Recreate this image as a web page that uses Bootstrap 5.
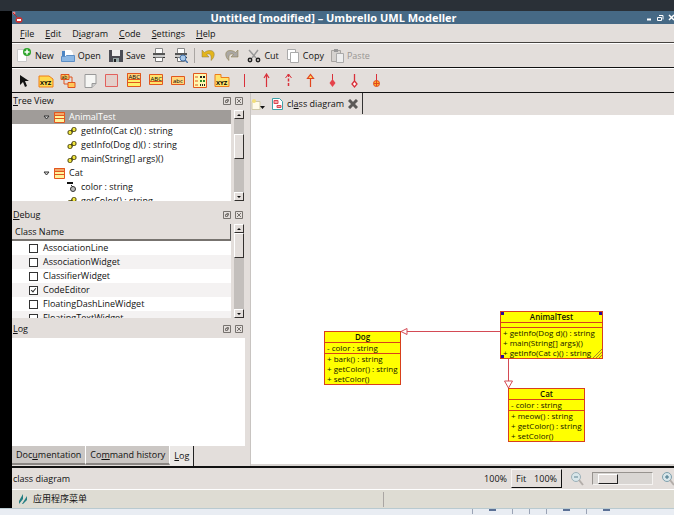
<!DOCTYPE html>
<html lang="en">
<head>
<meta charset="utf-8">
<meta name="viewport" content="width=device-width, initial-scale=1">
<title>Untitled [modified] – Umbrello UML Modeller</title>
<link href="https://cdn.jsdelivr.net/npm/bootstrap@5.3.0/dist/css/bootstrap.min.css" rel="stylesheet">
<style>
:root { --face: #e3dedb; --edge: #45423f; }
body { font: 9px/14px "Open Sans", "Noto Sans", "Noto Sans CJK SC", sans-serif; color: #111; background: #2a3037; }
button { font: inherit; color: inherit; background: none; border: 0; padding: 0; white-space: nowrap; }
svg { display: block; flex: none; }
.desk-top { height: 11px; }
.desk-bottom { height: 7px; background: #e9edf3; border-top: 1px solid #b9cad0; }
.desk-bottom i { width: 1px; height: 5px; background: #9aa3b5; }
.desk-bottom b { width: 7px; height: 2px; background: #5b7196; }
.desk-left { width: 12px; background: #000; }
.app { background: var(--face); }
.titlebar { height: 13px; background: #466985; color: #fff; font-size: 11px; line-height: 13px; }
.menus { height: 19px; gap: 11px; padding: 2px 8px 0; border-bottom: 1px solid var(--edge); }
.tools { height: 25px; border-top: 1px solid #fff; border-bottom: 1px solid #111; overflow: hidden; }
.main-tools { padding: 0 5px; }
.main-tools button { display: flex; align-items: center; gap: 3px; }
.main-tools .gap-item { margin-left: 8px; }
.main-tools .gap-tight { margin-left: 7px; }
.main-tools .vline { margin: 0 6px; }
.shape-tools { padding-left: 1px; }
.shape-tools button { width: 22px; flex: none; display: flex; justify-content: center; }
.vline { width: 1px; height: 15px; background: #aaa6a3; }
.side { width: 233px; }
.dock-title { height: 17px; line-height: 16px; padding: 0 2px 1px 1px; }
.dock-body { background: #fff; min-height: 0; }
.dock { min-height: 0; }
.dock-tree { flex: 108 1 0; padding-bottom: 6px; }
.dock-debug { flex: 111 1 0; padding-bottom: 3px; }
.dock-log { flex: 125 1 0; }
.tree li { height: 14px; display: flex; align-items: center; gap: 4px; white-space: nowrap; }
.tree li:not(.leaf) { padding-left: 31px; }
.tree .leaf { padding-left: 55px; }
.tree .chosen { background: #a09c99; color: #fff; }
.tree, .classes { flex: 1; min-width: 0; overflow: hidden; }
.classes table { width: 100%; border-collapse: separate; border-spacing: 0; }
.classes th { height: 17px; line-height: 14px; font-weight: 400; padding: 0 3px; background: var(--face); border-right: 1px solid #555; border-bottom: 2px solid #77736f; }
.classes td { height: 14px; padding: 0 0 0 17px; line-height: 14px; }
.classes tr:nth-child(even) td { background: #f4f2f2; }
.classes label { display: flex; align-items: center; gap: 5px; }
.classes input { appearance: none; width: 9px; height: 9px; margin: 0; border: 1px solid #333; background: #fff; position: relative; }
.classes input:checked::after { content: ""; position: absolute; left: 2px; top: 0; width: 3px; height: 5px; border: solid #333; border-width: 0 1px 1px 0; transform: rotate(40deg); }
.scroller { width: 14px; padding: 0 1px 0 3px; background: var(--face); }
.scroller .track { flex: 1; background: #c3bfbc; }
.scroller button, .grip { border: 1px solid; border-color: #fff #33302e #33302e #fff; background: var(--face); }
.scroller button { height: 9px; display: flex; align-items: center; justify-content: center; }
.scroller button::after { content: ""; border: solid transparent; border-width: 0 2px 2px; border-bottom-color: #111; }
.scroller button:last-child::after { border-width: 2px 2px 0; border-top-color: #111; }
.grip { height: 25px; }
.grip-mid { margin-top: 15px; }
.side-tabs { height: 20px; }
.side-tabs button { padding: 0 4px; height: 19px; background: #cbc7c4; border-right: 1px solid #fff; border-bottom: 2px solid #8a8683; }
.side-tabs .current { height: 20px; background: #ebe8e6; border-right: 1px solid #222; border-bottom: 0; }
.work { margin-left: 5px; border-left: 1px solid #c8c4c1; }
.work-tabs { height: 22px; }
.doc-tab { border-right: 1px solid #333; height: 21px; padding: 0 4px 0 1px; gap: 4px; }
.canvas { background: #fff; min-height: 0; overflow: hidden; border-bottom: 2px solid #d9d5d2; }
.uml { position: absolute; background: #ff0; border: 1px solid #d8401c; font-size: 8px; line-height: 10px; white-space: nowrap; color: #141400; }
.uml h2 { font-size: 8px; line-height: 10px; font-weight: 600; text-align: center; margin: 0; }
.uml ul { list-style: none; margin: 0; padding: 0 2px; border-top: 1px solid #d8401c; min-height: 5px; }
.dog { left: 73px; top: 216px; width: 77px; }
.animal { left: 249px; top: 196px; width: 103px; }
.cat { left: 257px; top: 273px; width: 77px; }
.handle { position: absolute; width: 3px; height: 3px; background: #2a0a9a; }
.hatch { position: absolute; right: 0; bottom: 0; }
.status { height: 23px; border-top: 2px solid #111; padding-left: 1px; }
.zoom-set { height: 19px; border: 1px solid; border-color: #f6f4f2 #111 #111 #f6f4f2; }
.zoom-set button { padding: 0 4px; }
.zoom-range { appearance: none; width: 61px; height: 13px; background: #d9d6d3; border: 1px solid; border-color: #97938f #f5f3f1 #f5f3f1 #97938f; }
.zoom-range::-webkit-slider-thumb { appearance: none; width: 20px; height: 10px; background: var(--face); border: 1px solid; border-color: #fff #222 #222 #fff; }
.taskbar { height: 19px; background: #dedcd3; border-top: 1px solid #fff; }
.task-split { margin-left: 296px; }
</style>
<script src="https://cdn.jsdelivr.net/npm/bootstrap@5.3.0/dist/js/bootstrap.bundle.min.js"></script>
</head>
<body class="vh-100 d-flex flex-column overflow-hidden">
<svg width="0" height="0" class="position-absolute" aria-hidden="true">
  <symbol id="op" viewBox="0 0 10 10"><path d="M3 7 7 3" stroke="#333" stroke-width="3"/><rect x="1" y="4.500" width="4" height="4" rx="1.500" fill="#f1e63c" stroke="#4a4410"/><rect x="5" y="1.500" width="4" height="4" rx="1.500" fill="#f1e63c" stroke="#4a4410"/></symbol>
  <symbol id="cls" viewBox="0 0 11 11"><path fill="#fff39a" stroke="#e2571e" d="M.5.500h10v10H.5z"/><path fill="#f2a868" stroke="#e2571e" d="M.5.500h10v3H.5z"/><path stroke="#e2571e" d="M0 6.500h11"/></symbol>
  <symbol id="twist" viewBox="0 0 7 5"><path d="M1 1h5L3.500 4z" fill="#ddd" stroke="#333"/></symbol>
  <symbol id="float" viewBox="0 0 8 8"><path fill="none" stroke="#77736f" d="M.5.500h7v7h-7zM2.500 5.500v-2h2v2zM3.500 2.500h2v2"/></symbol>
  <symbol id="shut" viewBox="0 0 8 8"><path fill="none" stroke="#77736f" d="M.5.500h7v7h-7zM2 2l4 4M6 2 2 6"/></symbol>
  <symbol id="printer" viewBox="0 0 14 15"><path fill="#fff" stroke="#888" d="M3.500.500h7v5h-7z"/><path fill="#555" d="M1 5h12v2H1z"/><path fill="#c9c9c9" d="M1 7h12v3H1z"/><path fill="#333" d="M1 9h12v1H1z"/><path fill="#fff" stroke="#777" d="M3.500 9.500h7v4h-7z"/></symbol>
  <symbol id="turn" viewBox="0 0 15 13"><path d="M1 1v7h7L5.500 5.500C8 4 11 5 10 11.500c4-3 5-10-1-10-2 0-4 .500-5.500 2z" fill="currentColor" stroke="#8a7a40" stroke-width=".5"/></symbol>
</svg>
<div class="desk-top flex-shrink-0"></div>
<div class="d-flex flex-grow-1 overflow-hidden">
<div class="desk-left flex-shrink-0"></div>
<div class="app d-flex flex-column flex-grow-1 overflow-hidden">
  <header class="titlebar d-flex flex-shrink-0">
    <svg width="11" height="13"><circle cx="2" cy="2" r="1.500" fill="#e88"/><path d="M1 2l4 4" stroke="#b22"/><ellipse cx="7" cy="9" rx="3.500" ry="3" fill="#c33"/><path d="M5 9h4" stroke="#fff" stroke-width="2"/></svg>
    <div class="flex-grow-1 text-center fw-bold text-truncate">Untitled [modified] – Umbrello UML Modeller</div>
    <button aria-label="Minimize"><svg width="12" height="13"><path d="M3 8.500h4" stroke="#fff" stroke-width="2"/></svg></button>
    <button aria-label="Restore"><svg width="10" height="13"><path d="M1.500 6.500h4v3h-4zM3 4.500h4v4" fill="none" stroke="#fff"/></svg></button>
    <button aria-label="Close"><svg width="8" height="13"><path d="M3 4l5 5M8 4 3 9" stroke="#fff" stroke-width="1.500"/></svg></button>
  </header>
  <nav class="menus d-flex flex-shrink-0">
    <button><u>F</u>ile</button><button><u>E</u>dit</button><button>D<u>i</u>agram</button><button><u>C</u>ode</button><button><u>S</u>ettings</button><button><u>H</u>elp</button>
  </nav>
  <div class="tools main-tools d-flex align-items-center flex-shrink-0" role="toolbar">
    <button><svg width="15" height="15"><path fill="#fff" stroke="#c9c9c9" d="M.5 1.500h9v12h-9z"/><circle cx="10" cy="4" r="4" fill="#2ea52b"/><path d="M10 1.500v5M7.500 4h5" stroke="#fff" stroke-width="1.500"/></svg>New</button>
    <button class="gap-tight"><svg width="14" height="14"><path fill="#4d86c4" d="M1 2h5l1 2h5v8H1z"/><path fill="#fff" d="M4 1h6l2 3v5H4z"/><path fill="#8db8e4" stroke="#5d8fc6" d="M.5 7.500h4l1-1h8v6H.5z"/></svg>Open</button>
    <button class="gap-item"><svg width="14" height="14"><path fill="#4c4d55" d="M0 1h14v12H0z"/><path fill="#f0f0f0" d="M3 1h8v6H3z"/><path fill="#9aa" d="M4 9h6v4H4z"/><path fill="#222" d="M5 10h2v3H5z"/></svg>Save</button>
    <button class="gap-tight" aria-label="Print"><svg width="14" height="15"><use href="#printer"/></svg></button>
    <button class="gap-item" aria-label="Print preview"><svg width="14" height="15"><use href="#printer"/><circle cx="9" cy="10" r="3" fill="#a9c9ea" stroke="#4472a8"/><path d="M11 12l3 3" stroke="#4472a8" stroke-width="1.500"/></svg></button>
    <span class="vline"></span>
    <button aria-label="Undo" style="color:#e3b51c"><svg width="15" height="13"><use href="#turn"/></svg></button>
    <button class="gap-item" aria-label="Redo" disabled style="color:#aaa7a4"><svg width="15" height="13"><use href="#turn" transform="matrix(-1 0 0 1 15 0)"/></svg></button>
    <button class="gap-item"><svg width="14" height="14"><path d="M2 1l7 8M11 1 5 9" stroke="#999" stroke-width="1.500"/><g fill="none" stroke="#222" stroke-width="1.500"><circle cx="3" cy="11" r="1.700"/><circle cx="11" cy="11" r="1.700"/></g></svg>Cut</button>
    <button class="gap-item"><svg width="13" height="14"><path fill="#fff" stroke="#aaa" d="M.5.500h8v10h-8z"/><path fill="#fff" stroke="#aaa" d="M3.500 3.500h8v10h-8z"/></svg>Copy</button>
    <button class="gap-tight" disabled style="color:#999693"><svg width="13" height="14"><path fill="#d5d2cf" stroke="#a7a4a1" d="M.5 1.500h9v11h-9z"/><path fill="#999" d="M3 0h4v3H3z"/><path fill="#eee" stroke="#aaa" d="M5.500 4.500h7v9h-7z"/></svg>Paste</button>
  </div>
  <div class="tools shape-tools d-flex align-items-center flex-shrink-0" role="toolbar">
    <button aria-label="Select"><svg width="10" height="14"><path d="M1 1v10l3-3 2 5 2-1-2-5h4z" fill="#111"/></svg></button>
    <button aria-label="Object"><svg width="16" height="14"><path d="M1 2h10l4 3v8H1z" fill="#ffd94f" stroke="#ee7d1a"/><text x="2" y="11" font-size="6" font-weight="700">XYZ</text></svg></button>
    <button aria-label="Association"><svg width="16" height="15"><path d="M1 1.500h8v5H1zM8 9.500h7v5H8z" fill="#ffc85a" stroke="#e0521d"/><path d="M9 4h3v5M4 7v4h4" fill="none" stroke="#e0521d"/><text x="1.500" y="6" font-size="5">ab</text></svg></button>
    <button aria-label="Note"><svg width="13" height="14"><path d="M1 .500h11v9l-4 4H1z" fill="#f6f6f4" stroke="#999"/><path d="M12 9.500H8v4" fill="#ccc" stroke="#999"/></svg></button>
    <button aria-label="Box"><svg width="14" height="14"><path d="M.5.500h12v12H.5z" fill="#e3d0cb" stroke="#e2605c"/></svg></button>
    <button aria-label="Class"><svg width="15" height="15"><path d="M.5.500h13v13H.5z" fill="#fff06a" stroke="#e2571e"/><path d="M.5.500h13v6H.5z" fill="#ffd27d" stroke="#e2571e"/><path d="M0 9.500h14" stroke="#e2571e"/><text x="1.500" y="6" font-size="6">ABC</text></svg></button>
    <button aria-label="Interface"><svg width="15" height="13"><path d="M.5.500h13v10H.5z" fill="#ffe36a" stroke="#e2571e"/><path d="M0 7.500h14" stroke="#e2571e"/><text x="1.500" y="6.500" font-size="6">ABC</text></svg></button>
    <button aria-label="Datatype"><svg width="15" height="10"><path d="M.5.500h13v8H.5z" fill="#ffd67b" stroke="#e2571e"/><text x="2" y="7" font-size="6">abc</text></svg></button>
    <button aria-label="Enum"><svg width="15" height="16"><path d="M.5.500h13v14H.5z" fill="#fff9b0" stroke="#e2571e"/><path d="M2 4h3M2 8h3M2 12h3" stroke="#e2571e"/><path d="M7 4h5" stroke="#222" stroke-width="2" stroke-dasharray="2 1"/><path d="M7 8h5" stroke="#2a8a28" stroke-width="2" stroke-dasharray="2 1"/><path d="M7 12h5" stroke="#222" stroke-width="2" stroke-dasharray="1 1"/></svg></button>
    <button aria-label="Package"><svg width="16" height="15"><path d="M1 1.500h6v3h8v9H1z" fill="#ffe36a" stroke="#ee7d1a"/><text x="2" y="12" font-size="6" font-weight="700">XYZ</text></svg></button>
    <button aria-label="Line"><svg width="9" height="15"><path d="M4.500 1v13" stroke="#d9303a"/></svg></button>
    <button aria-label="Directed association"><svg width="9" height="15"><path d="M4.500 1v13M2 5l2.500-4L7 5" fill="none" stroke="#d9303a" stroke-width="1.200"/></svg></button>
    <button aria-label="Dependency"><svg width="9" height="15"><path d="M4.500 1v13" stroke="#d9303a" stroke-width="1.500" stroke-dasharray="3 1.500"/><path d="M1.500 5l3-4 3 4" fill="none" stroke="#d9303a"/></svg></button>
    <button aria-label="Generalization"><svg width="9" height="15"><path d="M4.500 5v9M1.500 5.500h6l-3-4z" fill="#ffd95e" stroke="#e2451e" stroke-width="1.200"/></svg></button>
    <button aria-label="Composition"><svg width="9" height="15"><path d="M4.500 1v8" stroke="#d9303a"/><path d="M4.500 6l3 4-3 4-3-4z" fill="#e5434b"/></svg></button>
    <button aria-label="Aggregation"><svg width="9" height="15"><path d="M4.500 1v7l2.500 3-2.500 3L2 11l2.500-3" fill="#fff" stroke="#d9303a" stroke-width="1.300"/></svg></button>
    <button aria-label="Containment"><svg width="9" height="15"><path d="M4.500 1v7" stroke="#d9303a"/><circle cx="4.500" cy="10.500" r="3" fill="#ffb52e" stroke="#e2451e"/><path d="M2 10.500h5M4.500 8v5" stroke="#e2451e"/></svg></button>
  </div>
  <main class="d-flex flex-grow-1 overflow-hidden">
    <aside class="side d-flex flex-column flex-shrink-0">
      <section class="dock dock-tree d-flex flex-column">
        <div class="dock-title d-flex align-items-center flex-shrink-0"><span class="me-auto"><u>T</u>ree View</span><button aria-label="Float"><svg width="8" height="8"><use href="#float"/></svg></button><button class="ms-1" aria-label="Close"><svg width="8" height="8"><use href="#shut"/></svg></button></div>
        <div class="dock-body d-flex flex-grow-1">
          <ul class="tree list-unstyled m-0">
            <li class="chosen"><svg width="7" height="5"><use href="#twist"/></svg><svg width="11" height="11"><use href="#cls"/></svg>AnimalTest</li>
            <li class="leaf"><svg width="10" height="10"><use href="#op"/></svg>getInfo(Cat c)() : string</li>
            <li class="leaf"><svg width="10" height="10"><use href="#op"/></svg>getInfo(Dog d)() : string</li>
            <li class="leaf"><svg width="10" height="10"><use href="#op"/></svg>main(String[] args)()</li>
            <li><svg width="7" height="5"><use href="#twist"/></svg><svg width="11" height="11"><use href="#cls"/></svg>Cat</li>
            <li class="leaf"><svg width="10" height="12"><path d="M0 1h6v2H0z" fill="#111"/><circle cx="6" cy="8" r="2.500" fill="#bbb" stroke="#333"/><path d="M4 4l2 2" stroke="#333"/></svg>color : string</li>
            <li class="leaf"><svg width="10" height="10"><use href="#op"/></svg>getColor() : string</li>
          </ul>
          <div class="scroller d-flex flex-column"><button aria-label="Up"></button><div class="track"><div class="grip grip-mid"></div></div><button aria-label="Down"></button></div>
        </div>
      </section>
      <section class="dock dock-debug d-flex flex-column">
        <div class="dock-title d-flex align-items-center flex-shrink-0"><span class="me-auto"><u>D</u>ebug</span><button aria-label="Float"><svg width="8" height="8"><use href="#float"/></svg></button><button class="ms-1" aria-label="Close"><svg width="8" height="8"><use href="#shut"/></svg></button></div>
        <div class="dock-body d-flex flex-grow-1">
          <div class="classes"><table>
            <thead><tr><th scope="col">Class Name</th></tr></thead>
            <tbody>
              <tr><td><label><input type="checkbox">AssociationLine</label></td></tr>
              <tr><td><label><input type="checkbox">AssociationWidget</label></td></tr>
              <tr><td><label><input type="checkbox">ClassifierWidget</label></td></tr>
              <tr><td><label><input type="checkbox" checked>CodeEditor</label></td></tr>
              <tr><td><label><input type="checkbox">FloatingDashLineWidget</label></td></tr>
              <tr><td><label><input type="checkbox">FloatingTextWidget</label></td></tr>
            </tbody></table></div>
          <div class="scroller d-flex flex-column"><button aria-label="Up"></button><div class="track"><div class="grip"></div></div><button aria-label="Down"></button></div>
        </div>
      </section>
      <section class="dock dock-log d-flex flex-column">
        <div class="dock-title d-flex align-items-center flex-shrink-0"><span class="me-auto"><u>L</u>og</span><button aria-label="Float"><svg width="8" height="8"><use href="#float"/></svg></button><button class="ms-1" aria-label="Close"><svg width="8" height="8"><use href="#shut"/></svg></button></div>
        <div class="dock-body flex-grow-1"></div>
      </section>
      <div class="side-tabs d-flex flex-shrink-0"><button>Doc<u>u</u>mentation</button><button>Co<u>m</u>mand history</button><button class="current"><u>L</u>og</button></div>
    </aside>
    <section class="work d-flex flex-column flex-grow-1 overflow-hidden">
      <div class="work-tabs d-flex flex-shrink-0">
        <button class="pe-1" aria-label="New diagram"><svg width="16" height="16"><path d="M1 5.500h8v8H1z" fill="#fffbe8" stroke="#cfc9a8"/><circle cx="3" cy="5" r="2" fill="#f3df7a"/><path d="M9 10h5l-2.500 3z" fill="#111"/></svg></button>
        <div class="doc-tab d-flex align-items-center"><svg width="11" height="12"><path d="M.5.500h7l3 3v8H.5z" fill="#fff" stroke="#3fa1a8"/><path d="M2 2.500h4v3H2zM5 7.500h4v2H5z" fill="#f5a7a7" stroke="#d94a55"/></svg><span>cl<u>a</u>ss diagram</span><button aria-label="Close tab"><svg width="10" height="10"><path d="M1 1l8 8M9 1 1 9" stroke="#5b5957" stroke-width="3"/></svg></button></div>
      </div>
      <div class="canvas position-relative flex-grow-1">
        <svg width="360" height="300" fill="#fff" stroke="#d44a55"><path d="M249 216.500H156M150 216.500l6-3v6zM257.500 243v23M257.500 273l-4-7h8z"/></svg>
        <article class="uml dog"><h2>Dog</h2><ul><li>- color : string</li></ul><ul class="methods"><li>+ bark() : string</li><li>+ getColor() : string</li><li>+ setColor()</li></ul></article>
        <article class="uml animal"><h2>AnimalTest</h2><ul></ul><ul class="methods"><li>+ getInfo(Dog d)() : string</li><li>+ main(String[] args)()</li><li>+ getInfo(Cat c)() : string</li></ul>
          <i class="handle top-0 start-0"></i><i class="handle top-0 end-0"></i><i class="handle bottom-0 start-0"></i><svg class="hatch" width="9" height="9"><path d="M0 9 9 0M3 9l6-6M6 9l3-3" stroke="#a8862a"/></svg></article>
        <article class="uml cat"><h2>Cat</h2><ul><li>- color : string</li></ul><ul class="methods"><li>+ meow() : string</li><li>+ getColor() : string</li><li>+ setColor()</li></ul></article>
      </div>
    </section>
  </main>
  <footer class="status d-flex align-items-center flex-shrink-0 overflow-hidden">
    <span class="me-auto">class diagram</span>
    <span class="me-1">100%</span>
    <div class="zoom-set d-flex"><button>Fit</button><button>100%</button></div>
    <button class="ms-2" aria-label="Zoom out"><svg width="14" height="15"><circle cx="6" cy="6" r="4.500" fill="#d8e6ea" stroke="#9bb0b8"/><path d="M4 6h4" stroke="#5d8290"/><path d="M9 9l4 5" stroke="#b3aeaa" stroke-width="2"/></svg></button>
    <input class="zoom-range ms-2" type="range" aria-label="Zoom" min="0" max="100" value="14">
    <button class="ms-2" aria-label="Zoom in"><svg width="13" height="15"><circle cx="6" cy="6" r="4.500" fill="#d8e6ea" stroke="#7fa0ad"/><path d="M4 6h4M6 4v4" stroke="#3f7185"/><path d="M9 9l4 5" stroke="#b3aeaa" stroke-width="2"/></svg></button>
  </footer>
  <div class="taskbar d-flex align-items-center flex-shrink-0">
    <button class="d-flex align-items-center ps-1"><svg width="13" height="12"><path d="M3 8 7 1v5L3 11zM6 11l5-8v4l-4 4z" fill="#237e83"/></svg><span class="ps-1">应用程序菜单</span></button>
    <span class="vline task-split"></span>
  </div>
</div>
</div>
<div class="desk-bottom d-flex justify-content-end flex-shrink-0 gap-3 overflow-hidden"><i></i><b></b><i></i><i></i><i></i><b></b><i></i><b></b><span class="ps-5"></span></div>
</body>
</html>
